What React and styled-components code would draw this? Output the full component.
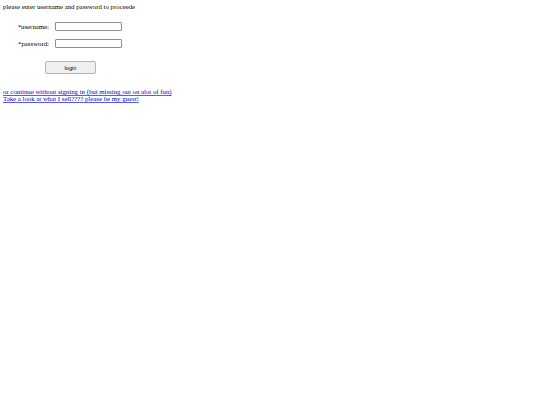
import React from "react";
import styled, { createGlobalStyle } from "styled-components";

const Global = createGlobalStyle`
  html, body { margin: 0; padding: 0; background: #fff; }
  body { margin: 3px; font-family: "Liberation Serif", "Times New Roman", serif; font-size: 6.8px; color: #000; }
`;

const Intro = styled.p`
  margin: 0 0 11px 0;
  line-height: 8px;
`;

const Form = styled.div`
  display: grid;
  grid-template-columns: 46px auto;
  column-gap: 6px;
  row-gap: 8px;
  align-items: center;
  width: max-content;
`;

const Label = styled.label`
  text-align: right;
  line-height: 9px;
`;

const Input = styled.input`
  box-sizing: border-box;
  width: 67px;
  height: 9px;
  margin: 0;
  padding: 0;
  border: 1px solid #8f8f8f;
  border-radius: 1px;
  background: #fff;
`;

const ButtonRow = styled.div`
  padding: 13px 0 0 42px;
`;

const Button = styled.button`
  box-sizing: border-box;
  width: 51px;
  height: 13px;
  margin: 0;
  padding: 0;
  font-family: "Liberation Sans", Arial, sans-serif;
  font-size: 5.6px;
  color: #000;
  background: #efefef;
  border: 1px solid #b5b5b5;
  border-radius: 2px;
`;

const Links = styled.div`
  margin: 15px 0 0 0;
  display: flex;
  flex-direction: column;
  align-items: flex-start;
`;

const Link = styled.a`
  display: block;
  height: 7px;
  line-height: 6.5px;
  color: #0000ee;
  text-decoration: underline;
  text-decoration-thickness: 1.4px;
  text-decoration-color: #5a5af0;
  text-underline-offset: 0.6px;
  text-decoration-skip-ink: none;
`;

export default function App() {
  return (
    <>
      <Global />
      <Intro>please enter username and password to proceede</Intro>
      <Form>
        <Label>*username:</Label>
        <Input type="text" />
        <Label>*password:</Label>
        <Input type="password" />
      </Form>
      <ButtonRow>
        <Button>login</Button>
      </ButtonRow>
      <Links>
        <Link href="#">or continue without signing in (but missing out on alot of fun)</Link>
        <Link href="#">Take a look at what I sell???? please be my guest!</Link>
      </Links>
    </>
  );
}
